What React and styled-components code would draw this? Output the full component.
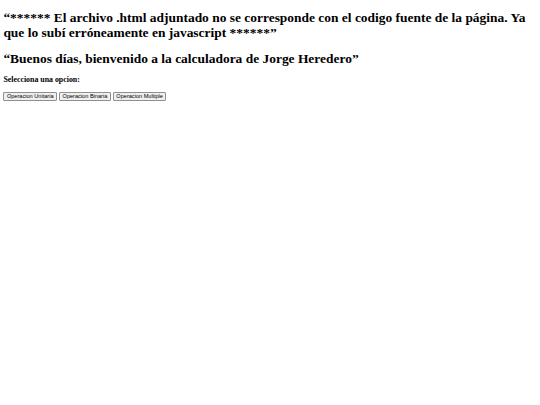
import React from 'react';
import styled, { createGlobalStyle } from 'styled-components';

const GlobalStyle = createGlobalStyle`
  body {
    margin: 3.4px;
    background: #ffffff;
    color: #000000;
    font-family: 'Liberation Serif', 'Times New Roman', serif;
  }
`;

const Title = styled.h1`
  font-size: 13.44px;
  font-weight: 700;
  line-height: 1.05;
  margin: 12px 0 9px;

  &:first-of-type {
    margin-top: 8px;
  }
`;

const Prompt = styled.h3`
  font-size: 7.86px;
  font-weight: 700;
  margin: 7.86px 0;
`;

const ButtonRow = styled.div`
  display: flex;
  gap: 2px;
`;

const OptionButton = styled.button`
  font-family: 'Liberation Sans', Arial, sans-serif;
  font-size: 5.6px;
  color: #000000;
  background: #efefef;
  border: 1px solid #8f8f8f;
  border-radius: 1px;
  padding: 0.5px 2.5px;
  margin: 0;
  line-height: normal;
  cursor: pointer;
`;

const options = ['Operacion Unitaria', 'Operacion Binaria', 'Operacion Multiple'];

const App = () => {
  return (
    <>
      <GlobalStyle />
      <Title>
        “****** El archivo .html adjuntado no se corresponde con el codigo fuente de la página. Ya
        que lo subí erróneamente en javascript ******”
      </Title>
      <Title>“Buenos días, bienvenido a la calculadora de Jorge Heredero”</Title>
      <Prompt>Selecciona una opcion:</Prompt>
      <ButtonRow>
        {options.map((label) => (
          <OptionButton key={label} type='button'>
            {label}
          </OptionButton>
        ))}
      </ButtonRow>
    </>
  );
};

export default App;
